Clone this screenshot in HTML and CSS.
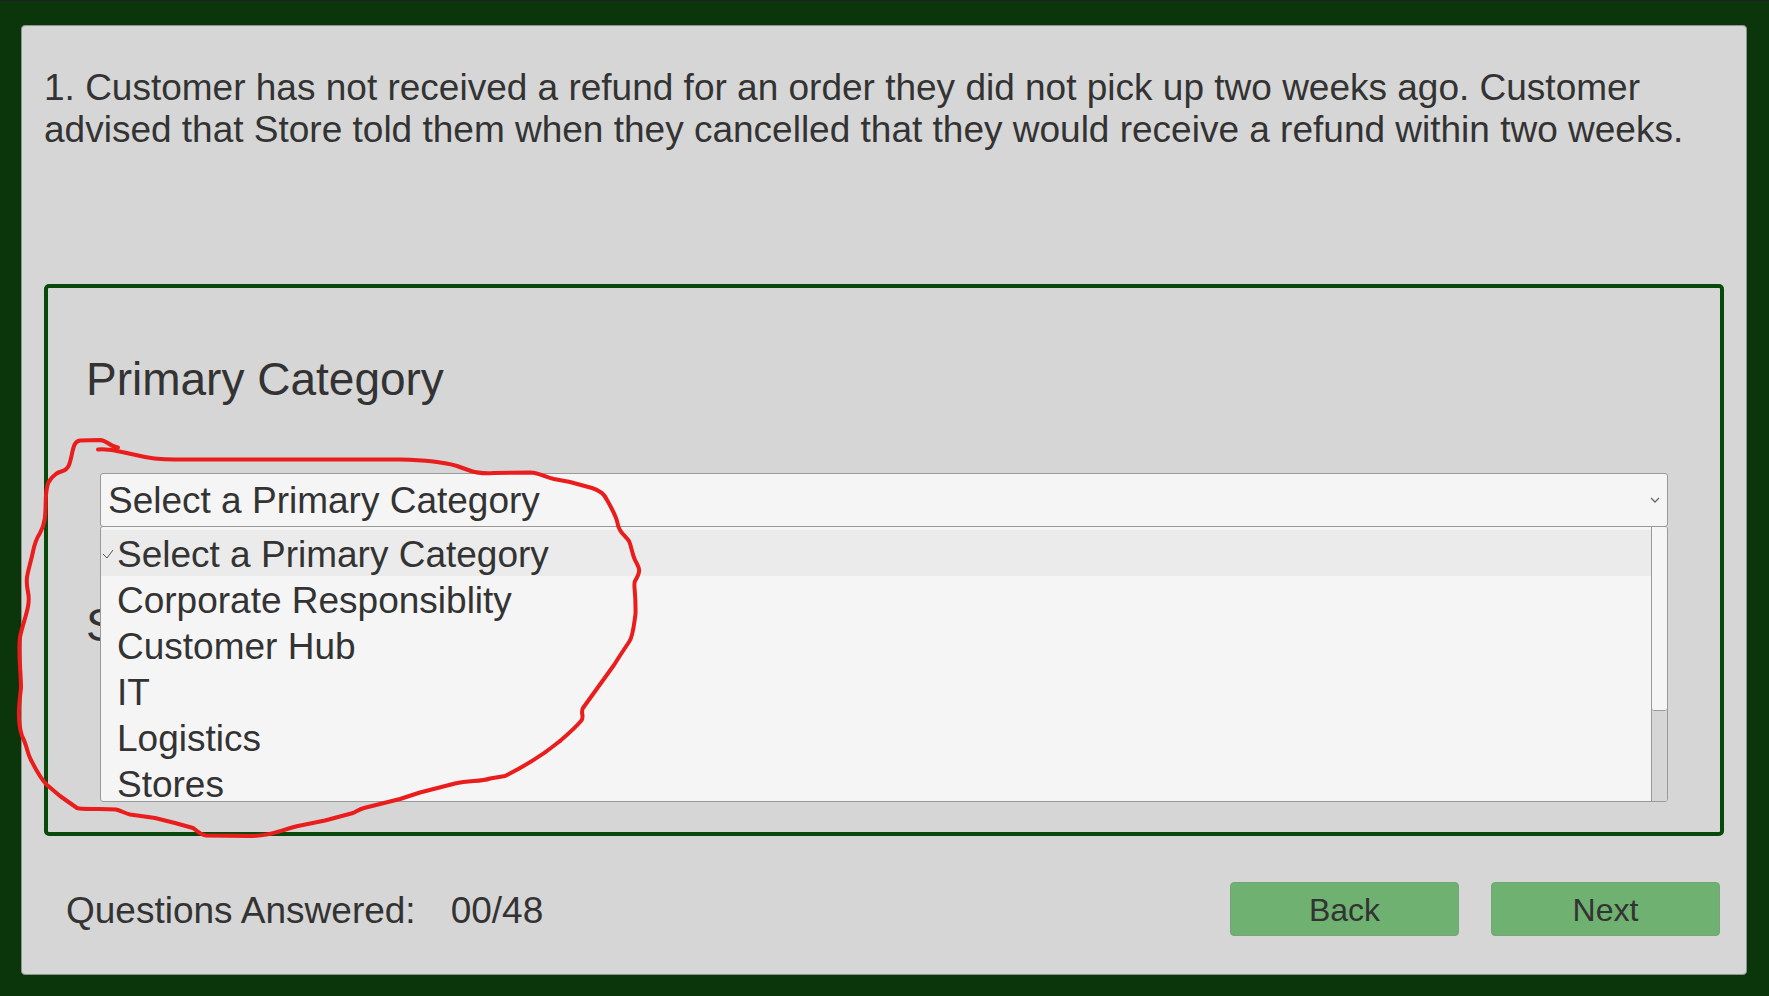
FILE: index.html
```html
<!DOCTYPE html>
<html lang="en">
<head>
<meta charset="utf-8">
<title>Customer Query Quiz</title>
<link rel="stylesheet" href="styles.css">
</head>
<body>
<main class="card">
  <p class="question">1. Customer has not received a refund for an order they did not pick up two weeks ago. Customer advised that Store told them when they cancelled that they would receive a refund within two weeks.</p>
  <section class="panel">
    <label class="heading" for="primary">Primary Category</label>
    <div class="dropdown">
      <select class="select" id="primary">
        <option>Select a Primary Category</option>
      </select>
      <svg class="chevron" viewBox="0 0 10 6" aria-hidden="true"><path d="M1 1l4 4 4-4"/></svg>
      <div class="popup">
        <ul class="options" role="listbox" aria-label="Primary Category">
          <li class="option option-selected" role="option" aria-selected="true"><svg class="tick" viewBox="0 0 12 10" aria-hidden="true"><path d="M1 5l4 4 6-8"/></svg>Select a Primary Category</li>
          <li class="option" role="option">Corporate Responsiblity</li>
          <li class="option" role="option">Customer Hub</li>
          <li class="option" role="option">IT</li>
          <li class="option" role="option">Logistics</li>
          <li class="option" role="option">Stores</li>
        </ul>
        <div class="track"><div class="thumb"></div></div>
      </div>
    </div>
    <h2 class="heading">S</h2>
  </section>
  <footer class="footer">
    <p class="progress"><span>Questions Answered:</span><span>00/48</span></p>
    <button class="button" type="button">Back</button>
    <button class="button" type="button">Next</button>
  </footer>
</main>
<svg class="ink" viewBox="0 0 700 900" aria-hidden="true">
  <path d="M98 449.500C106 449 114 450 122 452L145 457C160 460 170 459.500 215 459.500L400 459.500C420 460 440 461 457 466L471 471C480 474 486 473.500 495 473L530 472.500C540 473 545 477 554 479L570 482L592 488C601 491 604 494 607 500C612 509 615 514 617 521C619 533 624 534 629 541C632 548 632 554 635 560C640 569 641 571 635 581C633 585 636 590 635.500 614C634 624 633 637 629 642L621 654L614 665L583 708C580 713 585 717 581 721C575 728 567 735 560 741"/>
  <path d="M118 447.500C110 447 108 440.500 100 440L80 440.500C72 441 73 455 69 465C66 473 60 470 56 474C48 480 47 484 46 495C45 508 47 521 40 533C33 544 34 550 31 560C28 573 25 578 28 592C31 606 24 618 20 637C18 655 21 670 21 688C19 705 17 720 22 736C27 745 27 753 31 760C36 770 41 779 47 785L60 796L77 808C84 810 100 808 116 809.500C122 811 124 813 130 814.500L155 818L175 823L193 828C198 831 200 835 206 835.500L250 836C270 836 278 831 298 826L325 820.500L353 813C357 811 360 809 364 808L400 799L420 792.500L455 783.500C470 780 480 782 490 778.500L505 776C525 766 543 755 560 741"/>
</svg>
</body>
</html>
```
FILE: styles.css
```css
* { box-sizing: border-box; }

body {
  margin: 0;
  min-height: 100vh;
  padding: 24px 22px 21px 21px;
  display: flex;
  background: #0b350a;
  border-top: 1px solid #221e22;
  color: #333;
  font: 37px/42px "Liberation Sans", Arial, sans-serif;
}

.card {
  flex: 1;
  display: flex;
  flex-direction: column;
  padding: 41px 22px 38px;
  background: #d6d6d6;
  border: 1px solid #8b958b;
  border-radius: 4px;
}

.question {
  margin: 0;
  min-height: 217px;
}

.panel {
  flex: 1;
  padding: 64px 52px 0 38px;
  border: 4px solid #074a0b;
  border-radius: 5px;
}

.heading {
  display: block;
  margin: 0;
  font-size: 46px;
  font-weight: normal;
  line-height: 54px;
}

.dropdown {
  position: relative;
  margin: 67px 0 71px 14px;
}

.select {
  display: block;
  width: 100%;
  height: 54px;
  padding: 2px 7px 0;
  appearance: none;
  background: #f5f5f5;
  border: 1px solid #999;
  border-radius: 3px;
  color: inherit;
  font: inherit;
}

.chevron {
  position: absolute;
  top: 24px;
  right: 8px;
  width: 10px;
  height: 6px;
  fill: none;
  stroke: #666;
  stroke-width: 1.3;
}

.popup {
  position: absolute;
  top: 53px;
  left: 0;
  right: 0;
  height: 276px;
  display: flex;
  overflow: hidden;
  background: #f5f5f5;
  border: 1px solid #999;
  border-radius: 3px;
}

.options {
  flex: 1;
  margin: 0;
  padding: 3px 0 0;
  list-style: none;
}

.option {
  position: relative;
  padding: 4px 0 0 16px;
}

.option-selected { background: #ebebeb; }

.tick {
  position: absolute;
  top: 19px;
  left: 1px;
  width: 12px;
  height: 10px;
  fill: none;
  stroke: #555;
}

.track {
  width: 16px;
  background: #d6d6d6;
  border-left: 1px solid #999;
}

.thumb {
  height: 67%;
  background: #f5f5f5;
  border-bottom: 1px solid #999;
  border-radius: 0 0 3px 3px;
}

.footer {
  display: flex;
  align-items: center;
  gap: 32px;
  margin-top: 46px;
  padding: 0 4px 0 22px;
}

.progress {
  flex: 1;
  display: flex;
  gap: 35px;
  margin: 0;
  padding-top: 3px;
}

.button {
  width: 229px;
  height: 54px;
  padding: 2px 0 0;
  background: #6eb170;
  border: 1px solid #74a576;
  border-radius: 4px;
  color: inherit;
  font: inherit;
  font-size: 32px;
}

.ink {
  position: absolute;
  top: 0;
  left: 0;
  width: 700px;
  height: 900px;
  fill: none;
  stroke: #ea1c1c;
  stroke-width: 4;
  stroke-linecap: round;
  stroke-linejoin: round;
  pointer-events: none;
}
```
